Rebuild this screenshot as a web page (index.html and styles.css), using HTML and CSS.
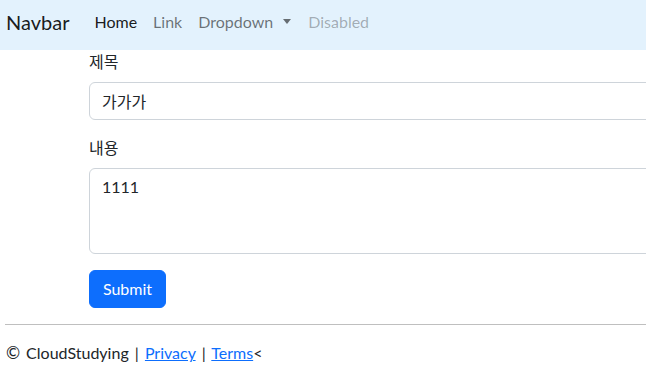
FILE: index.html
```html
<!DOCTYPE html>
<html lang="ko">
<head>
    <meta charset="UTF-8">
    <meta name="viewport" content="width=device-width, initial-scale=1.0">
    <title>글쓰기</title>
    <link rel="stylesheet" href="styles.css">
</head>
<body>

    <nav class="navbar">
        <a class="navbar-brand" href="#">Navbar</a>
        <ul class="navbar-nav">
            <li><a class="nav-link active" href="#">Home</a></li>
            <li><a class="nav-link" href="#">Link</a></li>
            <li><a class="nav-link dropdown-toggle" href="#">Dropdown</a></li>
            <li><a class="nav-link disabled">Disabled</a></li>
        </ul>
    </nav>

    <main class="page">
        <form class="write-form">
            <div class="form-row">
                <label class="form-label" for="title">제목</label>
                <input class="form-control" id="title" type="text" value="가가가">
            </div>
            <div class="form-row">
                <label class="form-label" for="content">내용</label>
                <textarea class="form-control form-textarea" id="content" rows="3">1111</textarea>
            </div>
            <button class="btn-primary" type="submit">Submit</button>
        </form>
    </main>

    <footer class="footer">
        <hr class="divider">
        <p class="footer-text"><span class="copy">©</span> CloudStudying | <a href="#">Privacy</a> | <a href="#">Terms</a>&lt;</p>
    </footer>

</body>
</html>
```

FILE: styles.css
```css
html, body {
    overflow: hidden;
}
body {
    margin: 0;
    padding: 0;
    font-family: "Segoe UI", Lato, "Noto Sans", "Noto Sans CJK KR", sans-serif;
    font-size: 16px;
    line-height: 24px;
    color: #212529;
    background-color: #fff;
}
.navbar {
    display: flex;
    align-items: center;
    height: 50px;
    padding: 0 6px 6px;
    box-sizing: border-box;
    background-color: #e3f2fd;
}
.navbar-brand {
    font-size: 20px;
    line-height: 30px;
    color: rgba(0, 0, 0, 0.9);
    text-decoration: none;
    margin-right: 17px;
}
.navbar-nav {
    display: flex;
    list-style: none;
    margin: 0;
    padding: 0;
}
.nav-link {
    display: block;
    padding: 8px;
    color: rgba(0, 0, 0, 0.55);
    text-decoration: none;
}
.nav-link.active {
    color: rgba(0, 0, 0, 0.9);
}
.nav-link.disabled {
    color: rgba(0, 0, 0, 0.3);
    padding-left: 9px;
}
.dropdown-toggle::after {
    display: inline-block;
    content: "";
    margin-left: 10px;
    vertical-align: 4px;
    border-top: 5px solid;
    border-left: 4px solid transparent;
    border-right: 4px solid transparent;
}
.page {
    padding-left: 89px;
}
.write-form {
    width: 620px;
}
.form-row {
    margin-bottom: 16px;
}
.form-label {
    display: block;
    margin-bottom: 8px;
}
.form-control {
    display: block;
    width: 100%;
    box-sizing: border-box;
    height: 38px;
    padding: 6px 12px;
    font: inherit;
    color: #212529;
    border: 1px solid #ced4da;
    border-radius: 6px;
    background-color: #fff;
}
.form-textarea {
    height: 86px;
    resize: vertical;
}
.btn-primary {
    display: block;
    height: 38px;
    width: 77px;
    padding: 0;
    font: inherit;
    color: #fff;
    background-color: #0d6efd;
    border: 1px solid #0d6efd;
    border-radius: 6px;
    cursor: pointer;
}
.footer {
    padding-left: 5px;
}
.divider {
    margin: 16px 0;
    width: 700px;
    border: 0;
    border-top: 1px solid rgba(0, 0, 0, 0.25);
}
.footer-text {
    margin: 0;
    padding-left: 1px;
    word-spacing: 2px;
}
.copy {
    display: inline-block;
    width: 14px;
    font-size: 17px;
}
.footer-text a {
    color: #0d6efd;
}
```
